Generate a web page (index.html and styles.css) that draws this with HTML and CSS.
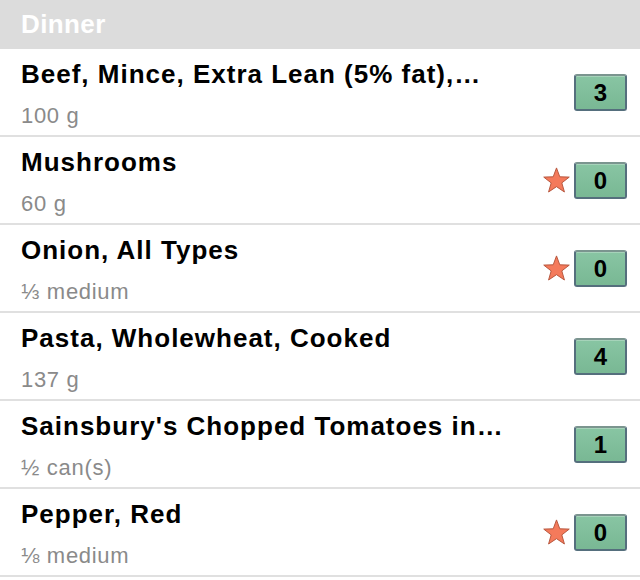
FILE: index.html
```html
<!DOCTYPE html>
<html lang="en">
<head>
  <meta charset="UTF-8" />
  <title>Dinner</title>
  <link rel="stylesheet" href="styles.css">
</head>
<body>

  <div class="section-head">Dinner</div>

  <ul class="food-list">
    <li class="food-row">
      <div class="info">
        <div class="title">Beef, Mince, Extra Lean (5% fat),…</div>
        <div class="sub">100 g</div>
      </div>
      <div class="points">
        <span class="badge">3</span>
      </div>
    </li>
    <li class="food-row">
      <div class="info">
        <div class="title">Mushrooms</div>
        <div class="sub">60 g</div>
      </div>
      <div class="points">
        <svg class="star" viewBox="0 0 30 28"><path d="M15 1.5l3.4 9.2 9.8.3-7.7 6 2.7 9.4L15 20.9l-8.2 5.5 2.7-9.4-7.7-6 9.8-.3z"/></svg>
        <span class="badge">0</span>
      </div>
    </li>
    <li class="food-row">
      <div class="info">
        <div class="title">Onion, All Types</div>
        <div class="sub">⅓ medium</div>
      </div>
      <div class="points">
        <svg class="star" viewBox="0 0 30 28"><path d="M15 1.5l3.4 9.2 9.8.3-7.7 6 2.7 9.4L15 20.9l-8.2 5.5 2.7-9.4-7.7-6 9.8-.3z"/></svg>
        <span class="badge">0</span>
      </div>
    </li>
    <li class="food-row">
      <div class="info">
        <div class="title">Pasta, Wholewheat, Cooked</div>
        <div class="sub">137 g</div>
      </div>
      <div class="points">
        <span class="badge">4</span>
      </div>
    </li>
    <li class="food-row">
      <div class="info">
        <div class="title">Sainsbury's Chopped Tomatoes in…</div>
        <div class="sub">½ can(s)</div>
      </div>
      <div class="points">
        <span class="badge">1</span>
      </div>
    </li>
    <li class="food-row">
      <div class="info">
        <div class="title">Pepper, Red</div>
        <div class="sub">⅛ medium</div>
      </div>
      <div class="points">
        <svg class="star" viewBox="0 0 30 28"><path d="M15 1.5l3.4 9.2 9.8.3-7.7 6 2.7 9.4L15 20.9l-8.2 5.5 2.7-9.4-7.7-6 9.8-.3z"/></svg>
        <span class="badge">0</span>
      </div>
    </li>
  </ul>

</body>
</html>
```

FILE: styles.css
```css
body {
  font-family: 'Liberation Sans', Arial, sans-serif;
  background-color: #fff;
  margin: 0;
}

.section-head {
  height: 49px;
  line-height: 49px;
  padding-left: 21px;
  background-color: #dcdcdc;
  color: #fff;
  font-size: 26px;
  letter-spacing: 0.4px;
  font-weight: bold;
}

.food-list {
  list-style: none;
  margin: 0;
  padding: 0;
}

.food-row {
  display: flex;
  align-items: center;
  height: 88px;
  box-sizing: border-box;
  padding: 0 13px 0 21px;
  border-bottom: 2px solid #e0e0e0;
}

.info {
  flex: 1;
  align-self: flex-start;
  padding-top: 11px;
}
.title {
  font-size: 26px;
  line-height: 28px;
  letter-spacing: 1px;
  font-weight: bold;
  color: #000;
  white-space: nowrap;
}
.sub {
  margin-top: 17px;
  font-size: 22px;
  line-height: 22px;
  letter-spacing: 0.7px;
  color: #8a8a8a;
}

.points {
  display: flex;
  align-items: center;
  gap: 3px;
}

/* favourite star */
.star {
  width: 29px;
  height: 28px;
  fill: #f47a5b;
  stroke: #b5553c;
  stroke-width: 1;
  stroke-linejoin: round;
}

/* points badge */
.badge {
  display: block;
  width: 53px;
  height: 37px;
  box-sizing: border-box;
  border: 2px solid #556f7d;
  border-top-color: #7b958f;
  border-radius: 3px;
  background: linear-gradient(#88c5a3, #79b894);
  box-shadow: inset 0 1px 0 rgba(255,255,255,0.25);
  text-align: center;
  line-height: 33px;
  font-size: 24px;
  font-weight: bold;
  color: #000;
}
```
